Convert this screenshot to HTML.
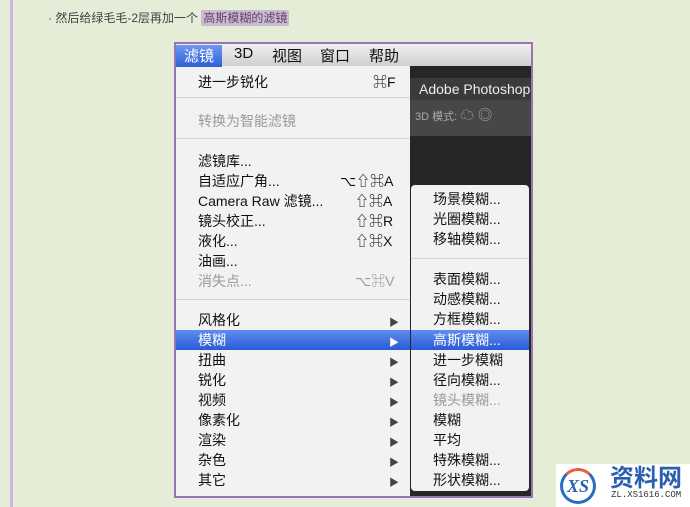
<!DOCTYPE html>
<html><head><meta charset="utf-8"><style>
*{margin:0;padding:0;box-sizing:border-box}
body{width:690px;height:507px;background:#e5edd6;position:relative;overflow:hidden;font-family:"Liberation Sans","Noto Sans CJK SC",sans-serif}
.vl{position:absolute;left:10px;top:0;width:3px;height:507px;background:#d3b5e3}
.cap{position:absolute;left:48px;top:10px;font-size:12px;color:#444;line-height:16px}
.cap span{background:#c9bccf;color:#5e4270;padding:1px 2px;border-radius:2px}
.box{position:absolute;left:174px;top:42px;width:359px;height:456px;border:2px solid #9a72b8;background:#f2f2f2;overflow:hidden}
.bar{position:absolute;left:0;top:0;width:355px;height:22px;background:linear-gradient(#f0f0f0,#cfcfcf);font-size:15px;color:#111}
.bar div{position:absolute;top:1px}
.hl{position:absolute;left:0;top:0;width:46px;height:22px;background:linear-gradient(#6d98f0,#2d5fd8)}
.dark{position:absolute;left:234px;top:22px;width:125px;height:432px;background:#262626}
.t{position:absolute;font-size:14px;color:#111;line-height:18px;white-space:nowrap}
.g{color:#9a9a9a}
.sep{position:absolute;height:1px;background:#d6d6d6}
.sel{position:absolute;background:linear-gradient(#5f8cf0,#2a5ad6)}
.w{color:#fff}
.ar{position:absolute;font-size:10px;color:#444;left:213px}
.sub{position:absolute;left:235px;top:141px;width:118px;height:306px;background:#f2f2f2;border-radius:4px}
</style></head><body>
<div class="vl"></div>
<div class="cap">· 然后给绿毛毛-2层再加一个 <span>高斯模糊的滤镜</span></div>
<div class="box">
 <div class="bar"><div class="hl"></div>
  <div style="left:8px;color:#fff">滤镜</div><div style="left:58px">3D</div><div style="left:96px">视图</div><div style="left:144px">窗口</div><div style="left:193px">帮助</div></div>
 <div class="dark">
  <div style="position:absolute;left:0;top:12px;width:125px;height:22px;background:#3b3b3b;color:#eee;font-size:14px;line-height:22px;padding-left:9px;white-space:nowrap">Adobe Photoshop</div>
  <div style="position:absolute;left:0;top:34px;width:125px;height:36px;background:#474747;color:#aaa;font-size:11px;line-height:30px;padding-left:5px">3D 模式: <span style="font-size:14px">☁ ◎</span></div>
 </div>
 <div class="t" style="left:22px;top:29px">进一步锐化</div><div class="t" style="left:197px;top:29px">⌘F</div>
 <div class="sep" style="left:0;top:53px;width:234px"></div>
 <div class="t g" style="left:22px;top:68px">转换为智能滤镜</div>
 <div class="sep" style="left:0;top:94px;width:234px"></div>
 <div class="t" style="left:22px;top:108px">滤镜库...</div>
 <div class="t" style="left:22px;top:128px">自适应广角...</div><div class="t" style="left:164px;top:128px">⌥⇧⌘A</div>
 <div class="t" style="left:22px;top:148px">Camera Raw 滤镜...</div><div class="t" style="left:179px;top:148px">⇧⌘A</div>
 <div class="t" style="left:22px;top:168px">镜头校正...</div><div class="t" style="left:179px;top:168px">⇧⌘R</div>
 <div class="t" style="left:22px;top:188px">液化...</div><div class="t" style="left:179px;top:188px">⇧⌘X</div>
 <div class="t" style="left:22px;top:208px">油画...</div>
 <div class="t g" style="left:22px;top:228px">消失点...</div><div class="t g" style="left:179px;top:228px">⌥⌘V</div>
 <div class="sep" style="left:0;top:255px;width:234px"></div>
 <div class="sel" style="left:0;top:286px;width:234px;height:20px"></div>
 <div class="t" style="left:22px;top:267px">风格化</div>
 <div class="t w" style="left:22px;top:287px">模糊</div>
 <div class="t" style="left:22px;top:307px">扭曲</div>
 <div class="t" style="left:22px;top:327px">锐化</div>
 <div class="t" style="left:22px;top:347px">视频</div>
 <div class="t" style="left:22px;top:367px">像素化</div>
 <div class="t" style="left:22px;top:387px">渲染</div>
 <div class="t" style="left:22px;top:407px">杂色</div>
 <div class="t" style="left:22px;top:427px">其它</div>
 <div class="ar" style="top:270px">▶</div><div class="ar" style="top:290px;color:#fff">▶</div><div class="ar" style="top:310px">▶</div><div class="ar" style="top:330px">▶</div><div class="ar" style="top:350px">▶</div><div class="ar" style="top:370px">▶</div><div class="ar" style="top:390px">▶</div><div class="ar" style="top:410px">▶</div><div class="ar" style="top:430px">▶</div>
 <div class="sub">
  <div class="t" style="left:22px;top:5px">场景模糊...</div>
  <div class="t" style="left:22px;top:25px">光圈模糊...</div>
  <div class="t" style="left:22px;top:45px">移轴模糊...</div>
  <div class="sep" style="left:0;top:73px;width:118px"></div>
  <div class="t" style="left:22px;top:85px">表面模糊...</div>
  <div class="t" style="left:22px;top:105px">动感模糊...</div>
  <div class="t" style="left:22px;top:125px">方框模糊...</div>
  <div class="sel" style="left:0;top:145px;width:118px;height:20px"></div>
  <div class="t w" style="left:22px;top:146px">高斯模糊...</div>
  <div class="t" style="left:22px;top:166px">进一步模糊</div>
  <div class="t" style="left:22px;top:186px">径向模糊...</div>
  <div class="t g" style="left:22px;top:206px">镜头模糊...</div>
  <div class="t" style="left:22px;top:226px">模糊</div>
  <div class="t" style="left:22px;top:246px">平均</div>
  <div class="t" style="left:22px;top:266px">特殊模糊...</div>
  <div class="t" style="left:22px;top:286px">形状模糊...</div>
 </div>
</div>
<div style="position:absolute;left:556px;top:464px;width:134px;height:43px;background:#fff"></div>
<div style="position:absolute;left:560px;top:468px;width:36px;height:36px;border:3px solid #2a6cc0;border-radius:50%;border-top-color:#e8603a;font:italic bold 18px 'Liberation Serif',serif;color:#2a5fb0;text-align:center;line-height:30px">XS</div>
<div style="position:absolute;left:610px;top:462px;font-size:24px;font-weight:bold;color:#2a5fb0;font-family:'Noto Sans CJK SC',sans-serif;line-height:28px">资料网</div>
<div style="position:absolute;left:611px;top:490px;font:9px 'Liberation Mono',monospace;color:#333">ZL.XS1616.COM</div>
</body></html>
